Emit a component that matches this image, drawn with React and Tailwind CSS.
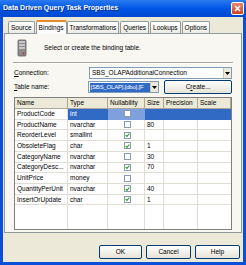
import { useState } from "react";

const rows = [
  { name: "ProductCode", type: "int", nul: false, size: "" },
  { name: "ProductName", type: "nvarchar", nul: false, size: "80" },
  { name: "ReorderLevel", type: "smallint", nul: true, size: "" },
  { name: "ObsoleteFlag", type: "char", nul: true, size: "1" },
  { name: "CategoryName", type: "nvarchar", nul: false, size: "30" },
  { name: "CategoryDesc...", type: "nvarchar", nul: true, size: "70" },
  { name: "UnitPrice", type: "money", nul: false, size: "" },
  { name: "QuantityPerUnit", type: "nvarchar", nul: true, size: "40" },
  { name: "InsertOrUpdate", type: "char", nul: true, size: "1" },
];

const tabs = ["Source", "Bindings", "Transformations", "Queries", "Lookups", "Options"];

function Check({ on }) {
  return (
    <div className="w-[7px] h-[7px] border border-[#8a9bb0] bg-white flex items-center justify-center">
      {on && (
        <svg width="6" height="6" viewBox="0 0 6 6">
          <path d="M0.8 3 L2.4 4.6 L5.2 1.2" stroke="#21a121" strokeWidth="1.3" fill="none" />
        </svg>
      )}
    </div>
  );
}

function Arrow() {
  return (
    <div className="w-[8px] h-full shrink-0 bg-[#ece9d8] border-l border-[#c9c5b4] flex items-center justify-center">
      <svg width="5" height="3" viewBox="0 0 5 3">
        <path d="M0 0 H5 L2.5 3 Z" fill="#000" />
      </svg>
    </div>
  );
}

function XpButton({ children, className }) {
  return (
    <div className={`h-[14px] rounded-[2px] border border-[#003c74] bg-gradient-to-b from-white to-[#e6e3d6] flex items-center justify-center ${className}`}>
      {children}
    </div>
  );
}

export default function App() {
  const [tab] = useState("Bindings");

  return (
    <div className="w-[246px] h-[265px] bg-[#0a4fd8] flex flex-col overflow-hidden text-black" style={{ fontFamily: '"Liberation Sans", Arial, sans-serif' }}>
      {/* title bar */}
      <div className="h-[17px] shrink-0 bg-gradient-to-b from-[#2a7af0] via-[#0055e5] to-[#0048d0] flex items-center justify-between pl-[3px] pr-[2px]">
        <span className="text-white font-bold text-[7px] [text-shadow:1px_1px_0_#0b2f8a]">Data Driven Query Task Properties</span>
        <div className="w-[13px] h-[13px] rounded-[2px] border border-white bg-gradient-to-b from-[#e9866a] to-[#c9401f] flex items-center justify-center">
          <svg width="7" height="7" viewBox="0 0 7 7">
            <path d="M1 1 L6 6 M6 1 L1 6" stroke="white" strokeWidth="1.6" />
          </svg>
        </div>
      </div>

      {/* dialog body */}
      <div className="flex-1 mx-[3px] mb-[3px] bg-[#ece9d8] flex flex-col px-[1px] pt-[2px]">
        {/* tabs */}
        <div className="flex items-end h-[14px] pl-[4px] text-[6.5px]">
          {tabs.map((t) => (
            <div
              key={t}
              className={
                t === tab
                  ? "h-[14px] px-[2px] bg-[#fcfcfe] border border-b-0 border-[#919b9c] border-t-[#e68b2c] border-t-2 rounded-t-[2px] flex items-center -mb-[1px] relative z-10"
                  : "h-[12px] px-[2px] bg-gradient-to-b from-white to-[#ecebe5] border border-b-0 border-[#919b9c] rounded-t-[2px] flex items-center mr-[1px]"
              }
            >
              {t}
            </div>
          ))}
        </div>

        {/* panel */}
        <div className="h-[200px] border border-[#919b9c] bg-[#f8f7f2] flex flex-col px-[9px]">
          <div className="flex items-center h-[28px] pl-[3px]">
            <svg width="10" height="18" viewBox="0 0 10 18">
              <rect x="1" y="1" width="8" height="16" rx="1" fill="#8c8c8c" stroke="#5a5a5a" strokeWidth="0.8" />
              <rect x="2" y="2" width="6" height="2" fill="#c8c8c8" />
              <rect x="2" y="5" width="6" height="2" fill="#c8c8c8" />
              <rect x="2" y="8" width="6" height="2" fill="#c8c8c8" />
              <circle cx="6.5" cy="14.5" r="0.9" fill="#d02020" />
            </svg>
            <span className="ml-[17px] text-[6.5px]">Select or create the binding table.</span>
          </div>
          <div className="h-[2px] border-t border-[#aca899] border-b border-b-white mx-[-1px]" />

          <div className="flex items-center mt-[3px] h-[12px] text-[6.5px]">
            <span className="w-[75px]"><u>C</u>onnection:</span>
            <div className="flex-1 h-[12px] border border-[#7f9db9] bg-white flex items-center">
              <span className="flex-1 pl-[2px]">SBS_OLAPAdditionalConnection</span>
              <Arrow />
            </div>
          </div>

          <div className="flex items-center mt-[2px] h-[12px] text-[6.5px]">
            <span className="w-[75px]"><u>T</u>able name:</span>
            <div className="w-[73px] h-[12px] border border-[#7f9db9] bg-white flex items-center">
              <span className="flex-1 ml-[1px] bg-[#316ac5] text-white whitespace-nowrap pl-[1px] text-[6px] tracking-[-0.2px]">[SBS_OLAP].[dbo].[F</span>
              <Arrow />
            </div>
            <XpButton className="ml-[5px] w-[69px] text-[6.5px]">C<u>r</u>eate...</XpButton>
          </div>

          {/* grid */}
          <div className="mt-[4px] h-[133px] border border-[#7f7f7f] bg-white flex flex-col text-[6.5px]">
            <div className="grid grid-cols-[53px_40px_37px_19px_34px_1fr] h-[11px] bg-[#ece9d8]">
              {["Name", "Type", "Nullability", "Size", "Precision", "Scale"].map((h) => (
                <div key={h} className="border-r border-b border-[#aca899] pl-[2px] flex items-center">{h}</div>
              ))}
            </div>
            {rows.map((r, i) => {
              const sel = i === 0;
              return (
                <div key={r.name} className="grid grid-cols-[53px_40px_37px_19px_34px_1fr] h-[10.7px]">
                  <div className="border-r border-b border-[#e0ded4] pl-[2px] flex items-center whitespace-nowrap overflow-hidden">{r.name}</div>
                  <div className={`border-r border-b pl-[2px] flex items-center ${sel ? "bg-[#316ac5] text-white border-[#316ac5]" : "border-[#e0ded4]"}`}>{r.type}</div>
                  <div className={`border-r border-b pl-[16px] flex items-center ${sel ? "bg-[#7ea0dc] border-[#7ea0dc]" : "border-[#e0ded4]"}`}>
                    <Check on={r.nul} />
                  </div>
                  <div className={`border-r border-b pl-[2px] flex items-center ${sel ? "bg-[#316ac5] border-[#316ac5]" : "border-[#e0ded4]"}`}>{r.size}</div>
                  <div className={`border-r border-b ${sel ? "bg-[#316ac5] border-[#316ac5]" : "border-[#e0ded4]"}`} />
                  <div className={`border-b ${sel ? "bg-[#316ac5] border-[#316ac5]" : "border-[#e0ded4]"}`} />
                </div>
              );
            })}
            <div className="flex-1 grid grid-cols-[53px_40px_37px_19px_34px_1fr]">
              <div className="border-r border-[#e0ded4]" />
              <div className="border-r border-[#e0ded4]" />
              <div className="border-r border-[#e0ded4]" />
              <div className="border-r border-[#e0ded4]" />
              <div className="border-r border-[#e0ded4]" />
              <div />
            </div>
          </div>
        </div>

        {/* buttons */}
        <div className="flex justify-end gap-[4px] mt-[12px] pr-[2px] text-[6.5px]">
          <XpButton className="w-[43px]">OK</XpButton>
          <XpButton className="w-[45px]">Cancel</XpButton>
          <XpButton className="w-[45px]">Help</XpButton>
        </div>
      </div>
    </div>
  );
}
